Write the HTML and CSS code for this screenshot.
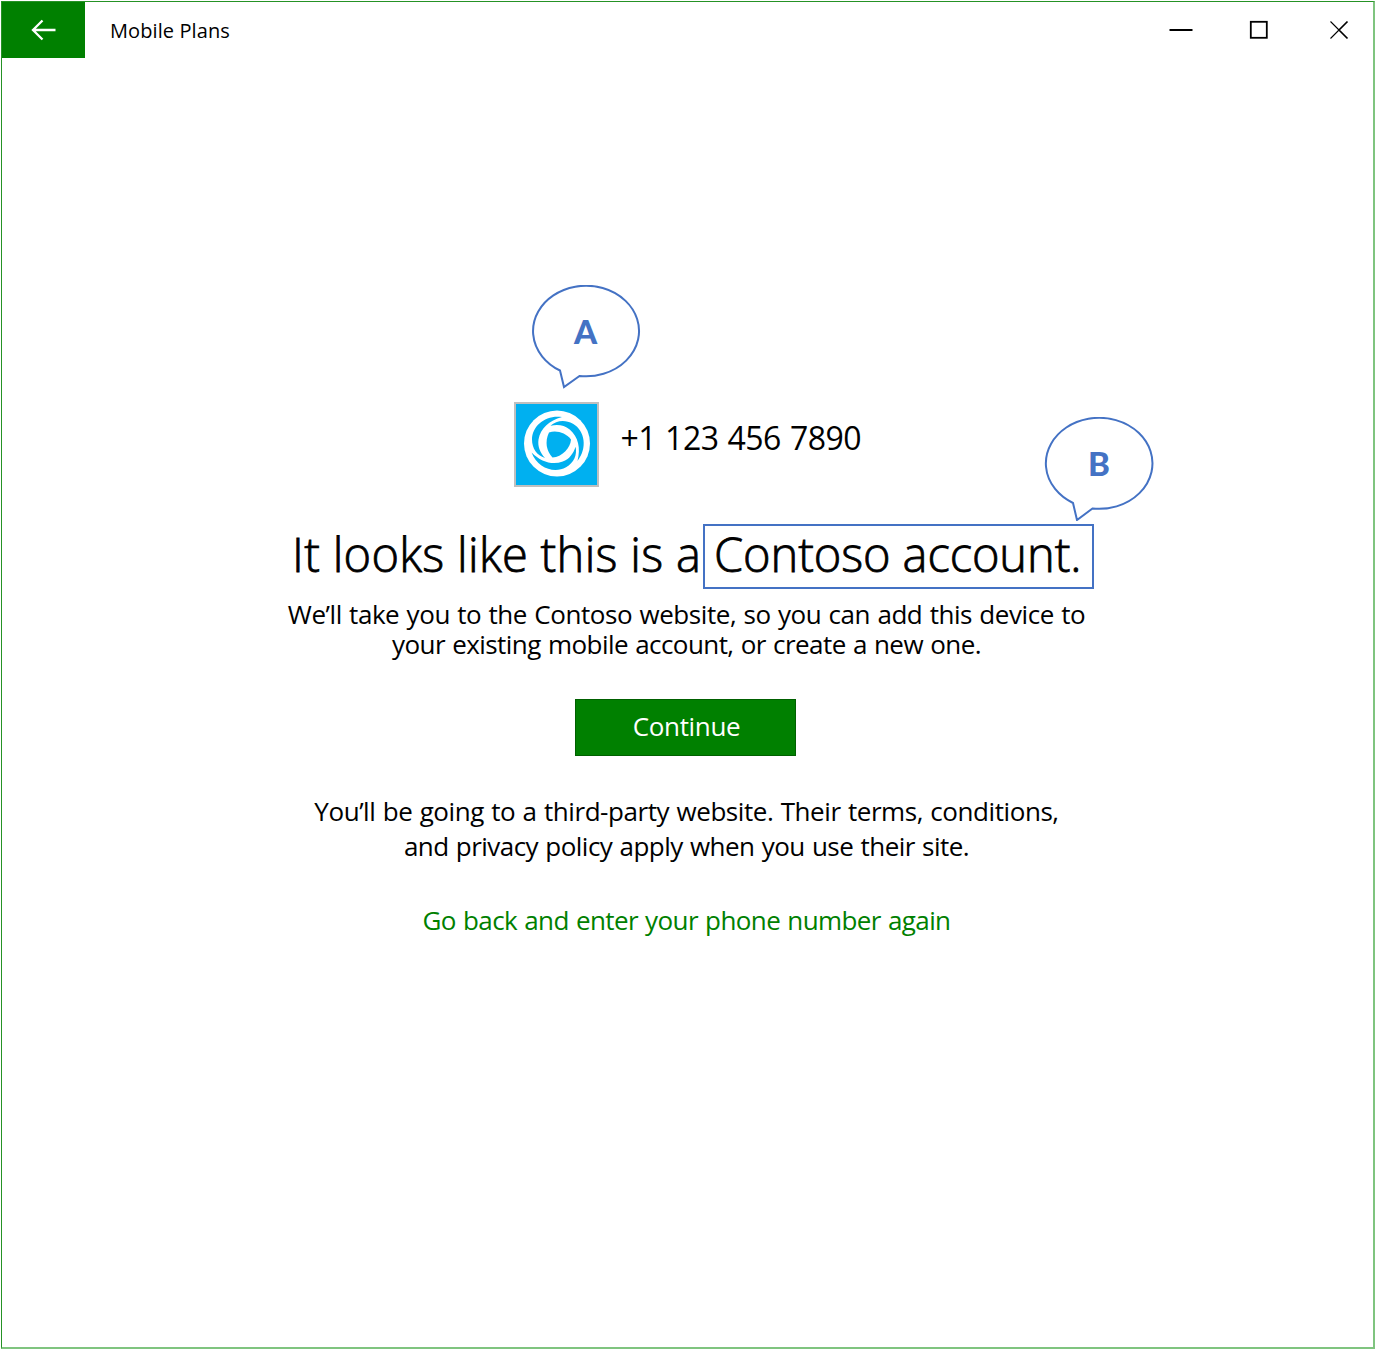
FILE: index.html
```html
<!DOCTYPE html>
<html lang="en">
<head>
<meta charset="utf-8">
<title>Mobile Plans</title>
<link rel="stylesheet" href="styles.css">
</head>
<body>
<div class="window">
  <header class="titlebar">
    <button class="back" aria-label="Back">
      <svg width="26" height="22" viewBox="0 0 26 22"><path d="M24.5 11H2M11.5 1.5L2 11l9.5 9.5" fill="none" stroke="#fff" stroke-width="2.3"/></svg>
    </button>
    <div class="app-name"><span>Mobile Plans</span></div>
    <div class="controls">
      <svg width="24" height="20" viewBox="0 0 24 20"><path d="M.5 10h23" stroke="#000" stroke-width="2"/></svg>
      <svg width="20" height="20" viewBox="0 0 20 20"><rect x="1.8" y="1.8" width="16" height="16" fill="none" stroke="#000" stroke-width="1.8"/></svg>
      <svg width="20" height="20" viewBox="0 0 20 20"><path d="M1.500 1.500L10 10M1.500 18.500L10 10" stroke="#000" stroke-width="1.1"/><path d="M10 10l8.500-8.500M10 10l8.500 8.500" stroke="#000" stroke-width="1.7"/></svg>
    </div>
  </header>
  <main class="content">
    <div class="account">
      <div class="logo">
        <svg width="81" height="81" viewBox="-41 -39.5 81 81">
          <circle r="33" fill="#fff"/>
          <g fill="#00b0f0">
            <path id="blade" d="M5-26.500C-11-29-25-18-25-4C-25 5-20 12-12 14.500C-17 9-19.500 3-18.500-4C-16.500-15-8-23 5-26.500Z"/>
            <use href="#blade" transform="rotate(120)"/>
            <use href="#blade" transform="rotate(240)"/>
            <path d="M-8-11C0-13.500 8.500-10.500 14-4C13.500 4.500 5 13.500 -4.500 14C-10.500 8-12.500-2-8-11Z"/>
          </g>
        </svg>
        <div class="callout callout-a">
          <svg width="110" height="104" viewBox="0 0 110 104"><path d="M29 85.500A53 45.300 0 1 1 48.500 91L33 102Z" fill="#fff" stroke="#4472c4" stroke-width="2"/></svg>
          <b>A</b>
        </div>
      </div>
      <span class="phone">+1 123 456 7890</span>
    </div>
    <h1 class="heading">
      <span class="lead">It looks like this is a</span>
      <span class="operator"><span class="operator-name">Contoso account.</span>
        <span class="callout callout-b">
          <svg width="110" height="104" viewBox="0 0 110 104"><path d="M29 86A53.300 45.500 0 1 1 48.500 91.500L33 103Z" fill="#fff" stroke="#4472c4" stroke-width="2"/></svg>
          <b>B</b>
        </span>
      </span>
    </h1>
    <p class="description"><span class="d1">We’ll take you to the Contoso website, so you can add this device to</span><span class="d2">your existing mobile account, or create a new one.</span></p>
    <button class="continue"><span>Continue</span></button>
    <p class="notice"><span class="n1">You’ll be going to a third-party website. Their terms, conditions,</span><span class="n2">and privacy policy apply when you use their site.</span></p>
    <a class="retry"><span>Go back and enter your phone number again</span></a>
  </main>
</div>
</body>
</html>
```
FILE: styles.css
```css
* { box-sizing: border-box; }
body {
  margin: 0;
  padding: 1px;
  background: #fff;
  color: #000;
  font-family: "Open Sans", "Noto Sans", sans-serif;
}
button { border: 0; padding: 0; font: inherit; }
svg { display: block; }
.window {
  width: 1374px;
  height: 1348px;
  border: 1px solid #259225;
  border-right: 2px solid #7fc47f;
  border-bottom: 2px solid #7fc47f;
}
.titlebar { display: flex; height: 56px; }
.back {
  display: grid;
  place-items: center;
  width: 83px;
  height: 56px;
  background: #008000;
}
.app-name {
  flex: 1;
  padding-left: 25px;
  font-size: 20px;
  line-height: 57px;
  letter-spacing: 0.1px;
}
.controls {
  display: flex;
  align-items: center;
  gap: 59px;
  padding-right: 24px;
}
.controls svg:first-child { margin-right: -3px; }
.controls svg:nth-child(2) { margin-right: 1px; }
.content {
  display: flex;
  flex-direction: column;
  align-items: center;
  padding: 344px 2px 0 0;
  white-space: nowrap;
  font-size: 26px;
}
.account {
  display: flex;
  width: 346px;
  height: 85px;
  gap: 22px;
}
.logo {
  position: relative;
  width: 85px;
  height: 85px;
  border: 2px solid #bfbfbf;
  background: #00b0f0;
}
.phone {
  font-size: 32px;
  line-height: 72px;
  letter-spacing: -0.5px;
  word-spacing: 1.2px;
}
.callout {
  position: absolute;
  width: 110px;
  height: 104px;
  color: #4472c4;
  font: bold 33px/92px Lato, sans-serif;
  letter-spacing: 0;
  text-align: center;
  -webkit-text-stroke: 0;
}
.callout svg { position: absolute; }
.callout b { position: relative; }
.callout-a { left: 15px; top: -119px; }
.callout-b { left: 339px; top: -109px; }
.heading {
  display: flex;
  align-self: flex-start;
  margin: 37px 0 0 290px;
  font-size: 47px;
  font-weight: 300;
  line-height: 60px;
  -webkit-text-stroke: 0.8px #000;
}
.lead { width: 411px; letter-spacing: 0.3px; }
.operator {
  position: relative;
  width: 391px;
  height: 65px;
  border: 2px solid #4472c4;
  padding-left: 9px;
  line-height: 57px;
}
.operator-name { letter-spacing: -0.1px; }
.description, .notice {
  display: flex;
  flex-direction: column;
  align-items: center;
  margin: 0;
}
.description { margin-top: 10px; line-height: 30px; word-spacing: 1px; }
.d1 { letter-spacing: -0.44px; }
.d2 { letter-spacing: -0.56px; }
.continue {
  width: 221px;
  height: 57px;
  margin-top: 40px;
  margin-right: 2px;
  padding: 0 0 3px 2px;
  border: 1px solid #006000;
  background: #008000;
  color: #fff;
  letter-spacing: -0.35px;
}
.notice { margin-top: 38px; line-height: 35px; word-spacing: 1px; }
.n1 { letter-spacing: -0.43px; }
.n2 { letter-spacing: -0.53px; }
.retry {
  margin-top: 38px;
  line-height: 36px;
  color: #008000;
  letter-spacing: -0.6px;
  word-spacing: 1px;
}
```
